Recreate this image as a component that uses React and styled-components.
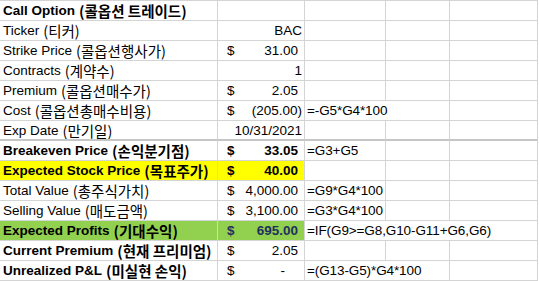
import React from 'react';
import styled, { createGlobalStyle } from 'styled-components';

const GlobalStyle = createGlobalStyle`
  body {
    margin: 0;
    background: #ffffff;
    font-family: "Liberation Sans", Arial, "Noto Sans CJK KR", sans-serif;
  }
`;

const Sheet = styled.div`
  display: grid;
  grid-template-columns: 218px 87px 81px 64px 88px;
  width: 538px;
  border-top: 1px solid #d4d4d4;
  font-size: 13.5px;
  color: #000000;
`;

const Cell = styled.div`
  grid-column: span ${(p) => p.$span || 1};
  height: ${(p) => (p.$thick ? 18 : 19)}px;
  border-right: 1px solid #d4d4d4;
  border-bottom: ${(p) => (p.$thick ? '2px solid #c6c6c6' : '1px solid #d4d4d4')};
  background: ${(p) => p.$bg || 'transparent'};
  font-weight: ${(p) => (p.$bold ? 700 : 400)};
  color: ${(p) => p.$color || '#000000'};
  display: flex;
  align-items: center;
  justify-content: ${(p) => (p.$right ? 'flex-end' : 'flex-start')};
  padding: 0 2px 0 3px;
  white-space: nowrap;
  overflow: hidden;
  box-sizing: content-box;
  line-height: 19px;
`;

const LabelCell = styled(Cell)`
  width: 212px;
`;

const Money = styled(Cell)`
  justify-content: space-between;
  padding-left: 9px;
  padding-right: ${(p) => p.$pr}px;
`;

const Ko = styled.span`
  font-family: "Noto Sans CJK KR", sans-serif;
  font-size: 14.5px;
  margin-left: 4px;
  line-height: 19px;
`;

const Formula = styled(Cell)`
  padding-left: 2px;
  letter-spacing: -0.1px;
`;

const rows = [
  { en: 'Call Option', ko: '콜옵션 트레이드', bold: true },
  { en: 'Ticker', ko: '티커', plain: 'BAC' },
  { en: 'Strike Price', ko: '콜옵션행사가', money: '31.00' },
  { en: 'Contracts', ko: '계약수', plain: '1' },
  { en: 'Premium', ko: '콜옵션매수가', money: '2.05' },
  { en: 'Cost', ko: '콜옵션총매수비용', money: '(205.00)', neg: true, formula: '=-G5*G4*100', span: 2 },
  { en: 'Exp Date', ko: '만기일', plain: '10/31/2021', thick: true },
  { en: 'Breakeven Price', ko: '손익분기점', bold: true, money: '33.05', boldValue: true, formula: '=G3+G5' },
  { en: 'Expected Stock Price', ko: '목표주가', bold: true, money: '40.00', boldValue: true, bg: '#ffff00' },
  { en: 'Total Value', ko: '총주식가치', money: '4,000.00', formula: '=G9*G4*100' },
  { en: 'Selling Value', ko: '매도금액', money: '3,100.00', formula: '=G3*G4*100' },
  {
    en: 'Expected Profits',
    ko: '기대수익',
    bold: true,
    money: '695.00',
    boldValue: true,
    bg: '#92d050',
    color: '#1f2f5e',
    formula: '=IF(G9>=G8,G10-G11+G6,G6)',
    span: 3,
  },
  { en: 'Current Premium', ko: '현재 프리미엄', bold: true, money: '2.05' },
  { en: 'Unrealized P&L', ko: '미실현 손익', bold: true, money: '-', dash: true, formula: '=(G13-G5)*G4*100', span: 2 },
];

const Row = ({ r }) => {
  const span = r.formula ? r.span || 1 : 0;
  const blanks = 3 - span;
  const pr = r.neg ? 2 : r.dash ? 19 : 6;
  return (
    <>
      <LabelCell $bold={r.bold} $bg={r.bg} $thick={r.thick}>
        {r.en}
        <Ko>({r.ko})</Ko>
      </LabelCell>
      {r.money ? (
        <Money $pr={pr} $bg={r.bg} $thick={r.thick} $bold={r.boldValue} $color={r.color}>
          <span>$</span>
          <span>{r.money}</span>
        </Money>
      ) : (
        <Cell $right $bg={r.bg} $thick={r.thick}>
          {r.plain}
        </Cell>
      )}
      {r.formula && (
        <Formula $span={span} $thick={r.thick}>
          {r.formula}
        </Formula>
      )}
      {Array.from({ length: blanks }).map((_, i) => (
        <Cell key={i} $thick={r.thick} />
      ))}
    </>
  );
};

const App = () => (
  <>
    <GlobalStyle />
    <Sheet>
      {rows.map((r, i) => (
        <Row key={i} r={r} />
      ))}
    </Sheet>
  </>
);

export default App;
